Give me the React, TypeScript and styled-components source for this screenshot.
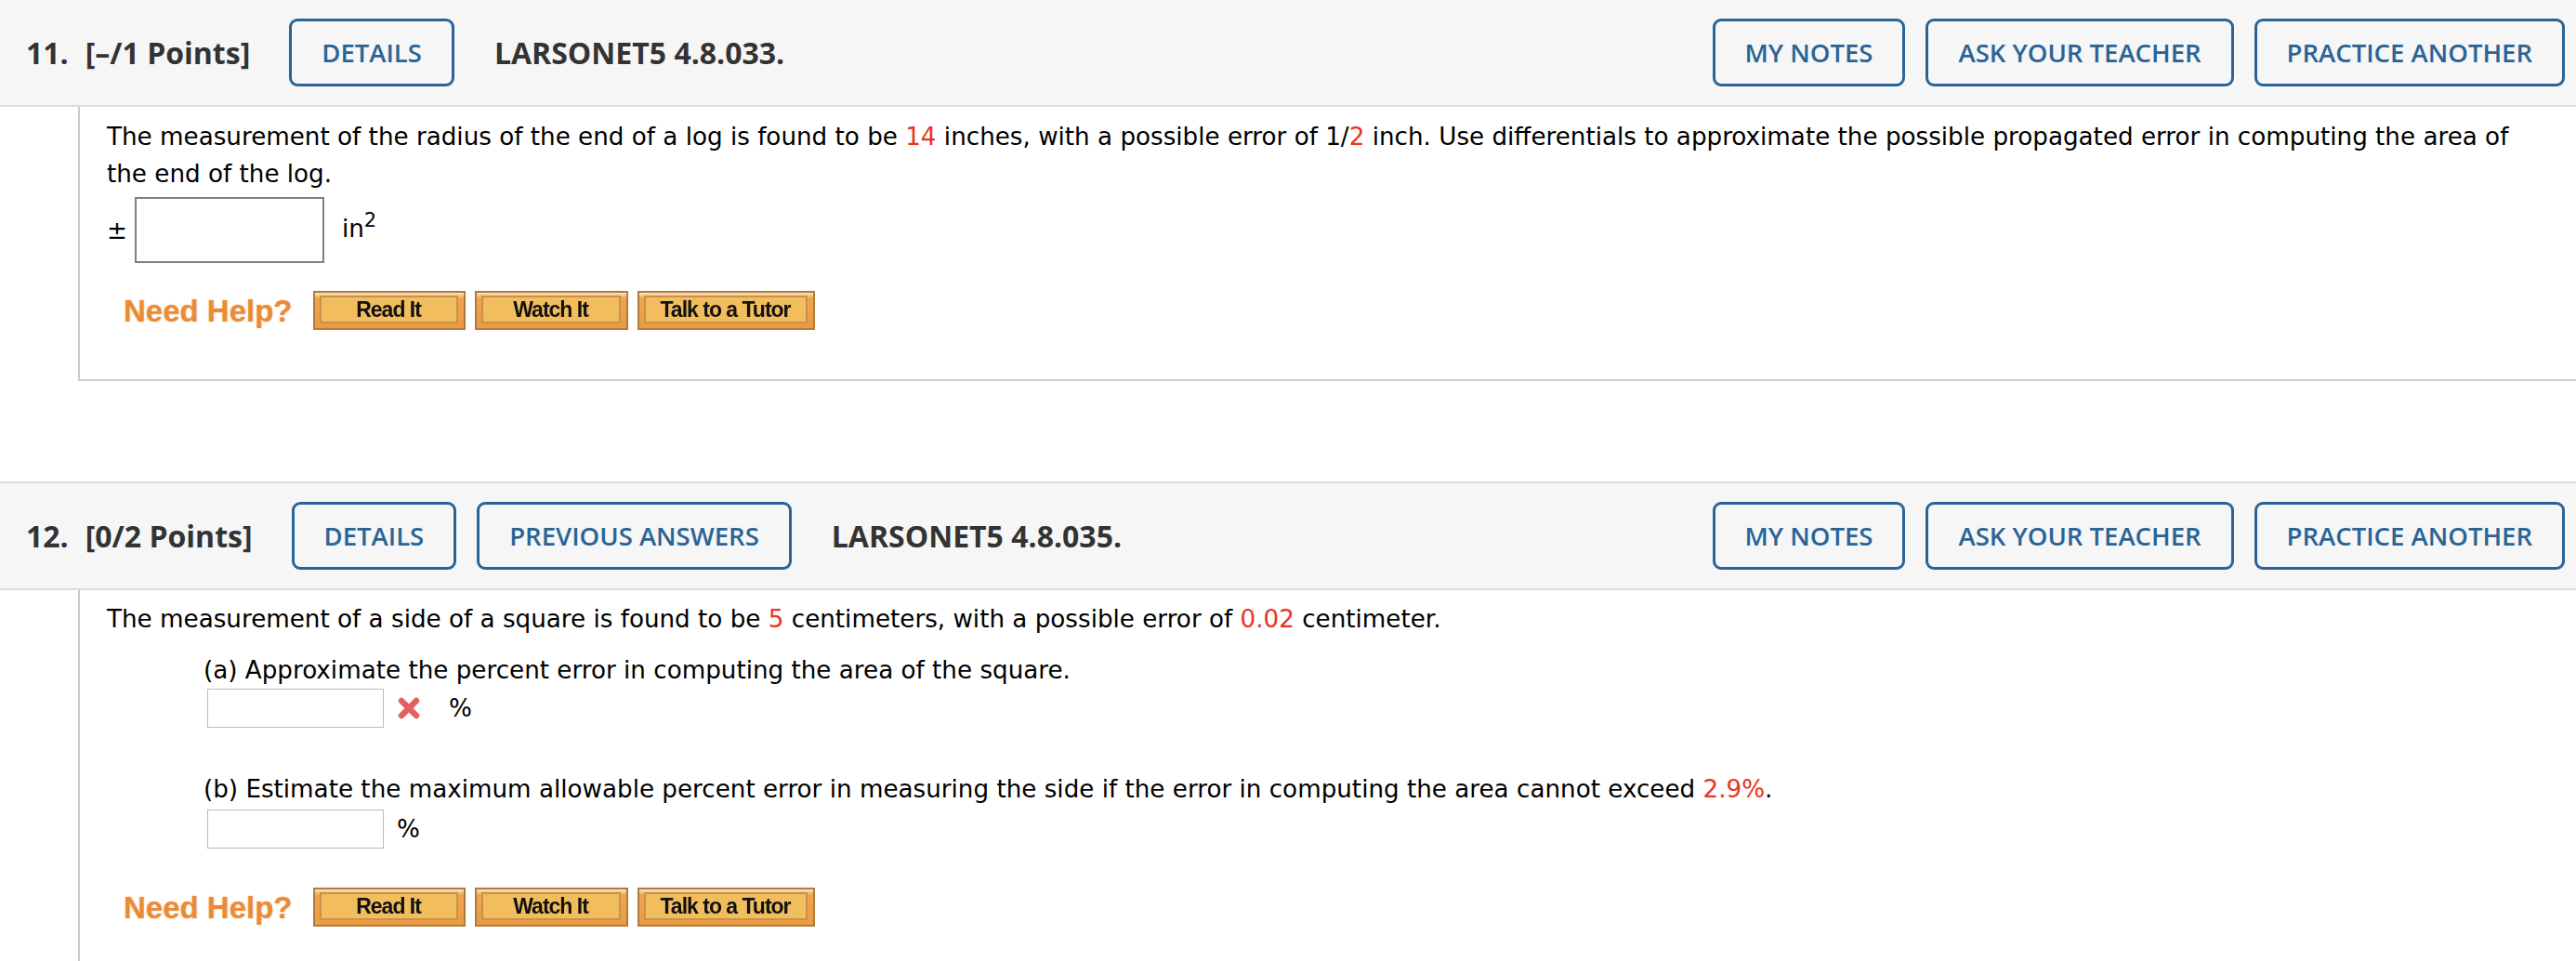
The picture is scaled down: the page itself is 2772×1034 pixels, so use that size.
import React from 'react';
import styled, { createGlobalStyle } from 'styled-components';

const GlobalStyle = createGlobalStyle`
  html, body {
    margin: 0;
    padding: 0;
    background: #fff;
  }
  body {
    font-family: "DejaVu Sans", Verdana, sans-serif;
    color: #000;
  }
`;

const Page = styled.div`
  width: 2772px;
`;

const Question = styled.section<{ $spaced?: boolean }>`
  margin-top: ${p => (p.$spaced ? '108px' : '0')};
`;

const Header = styled.div<{ $topBorder?: boolean }>`
  display: flex;
  align-items: center;
  box-sizing: border-box;
  height: ${p => (p.$topBorder ? 117 : 115)}px;
  padding: 0 12px 0 28px;
  background: #f6f6f6;
  border-top: ${p => (p.$topBorder ? '2px solid #ddd' : 'none')};
  border-bottom: 2px solid #ddd;
  font-family: "Open Sans", "Liberation Sans", sans-serif;
`;

const Title = styled.div`
  display: flex;
  align-items: center;
  font-size: 32px;
  font-weight: 700;
  color: #333;
  margin-right: 42px;
`;

const Num = styled.span`
  margin-right: 18px;
`;

const ButtonGroup = styled.div<{ $right?: boolean }>`
  display: flex;
  gap: 22px;
  margin-left: ${p => (p.$right ? 'auto' : '0')};
`;

const OutlineButton = styled.button`
  box-sizing: border-box;
  height: 73px;
  padding: 0 32px;
  border: 3px solid #2a6496;
  border-radius: 9px;
  background: transparent;
  color: #2a6496;
  font-family: "Open Sans", "Liberation Sans", sans-serif;
  font-size: 27.5px;
  font-weight: 600;
  cursor: pointer;
`;

const Code = styled.span`
  margin-left: 43px;
  font-size: 32px;
  font-weight: 700;
  color: #333;
`;

const Body = styled.div<{ $pt: number; $pb: number }>`
  margin-left: 84px;
  padding: ${p => p.$pt}px 42px ${p => p.$pb}px 29px;
  border-left: 2px solid #ccc;
  border-bottom: 2px solid #ccc;
  font-size: 26.2px;
  line-height: 40px;
`;

const Prompt = styled.div``;

const Red = styled.span`
  color: #ea3323;
`;

const AnswerRow = styled.div`
  display: flex;
  align-items: center;
  margin-top: 5px;
`;

const BigInput = styled.div`
  box-sizing: border-box;
  width: 204px;
  height: 71px;
  margin: 0 19px 0 8px;
  border: 2px solid #808080;
  background: #fff;
`;

const Unit = styled.span`
  position: relative;
  top: -2px;
`;

const Sup = styled.sup`
  font-size: 21px;
  line-height: 0;
  vertical-align: 11px;
`;

const Part = styled.div<{ $mt: number }>`
  margin: ${p => p.$mt}px 0 0 104px;
`;

const PartRow = styled.div<{ $mt: number }>`
  display: flex;
  align-items: center;
  margin: ${p => p.$mt}px 0 0 4px;
  height: 42px;
`;

const SmallInput = styled.div`
  box-sizing: border-box;
  width: 190px;
  height: 42px;
  border: 1px solid #bbb;
  background: #fff;
`;

const WrongMark = styled.svg`
  margin-left: 14px;
  filter: blur(0.6px);
`;

const Percent = styled.span<{ $ml: number }>`
  margin-left: ${p => p.$ml}px;
`;

const HelpRow = styled.div<{ $mt: number }>`
  display: flex;
  align-items: center;
  gap: 10px;
  margin: ${p => p.$mt}px 0 0 18px;
`;

const NeedHelp = styled.span`
  margin-right: 12px;
  font-family: "Liberation Sans", Arial, sans-serif;
  font-size: 33px;
  font-weight: 700;
  line-height: 41px;
  color: #e98b37;
  text-shadow: 0 0 2px rgba(233, 139, 55, 0.55);
`;

const HelpButton = styled.span<{ $w: number }>`
  display: flex;
  box-sizing: border-box;
  width: ${p => p.$w}px;
  height: 42px;
  padding: 3px 6px 5px 5px;
  border: 2px solid #b07c3e;
  background: linear-gradient(#fbe6c4 0, #f0a54d 6px, #eb9b42 100%);
`;

const HelpFace = styled.span`
  flex: 1;
  display: flex;
  align-items: center;
  justify-content: center;
  border: 2px solid #c8924e;
  background: #f2bd5c;
  font-family: "Liberation Sans", Arial, sans-serif;
  font-size: 23px;
  font-weight: 700;
  letter-spacing: -1px;
  color: #111;
  filter: blur(0.5px);
`;

const HelpButtons = () => (
  <>
    <NeedHelp>Need Help?</NeedHelp>
    <HelpButton $w={164}>
      <HelpFace>Read It</HelpFace>
    </HelpButton>
    <HelpButton $w={165}>
      <HelpFace>Watch It</HelpFace>
    </HelpButton>
    <HelpButton $w={191}>
      <HelpFace>Talk to a Tutor</HelpFace>
    </HelpButton>
  </>
);

const RightButtons = () => (
  <ButtonGroup $right>
    <OutlineButton>MY NOTES</OutlineButton>
    <OutlineButton>ASK YOUR TEACHER</OutlineButton>
    <OutlineButton>PRACTICE ANOTHER</OutlineButton>
  </ButtonGroup>
);

const App = () => {
  return (
    <Page>
      <GlobalStyle />

      <Question>
        <Header>
          <Title>
            <Num>11.</Num>
            <span>[–/1 Points]</span>
          </Title>
          <ButtonGroup>
            <OutlineButton>DETAILS</OutlineButton>
          </ButtonGroup>
          <Code>LARSONET5 4.8.033.</Code>
          <RightButtons />
        </Header>
        <Body $pt={12} $pb={53}>
          <Prompt>
            The measurement of the radius of the end of a log is found to be <Red>14</Red> inches,
            with a possible error of 1/<Red>2</Red> inch. Use differentials to approximate the
            possible propagated error in computing the area of the end of the log.
          </Prompt>
          <AnswerRow>
            <span>±</span>
            <BigInput />
            <Unit>
              in<Sup>2</Sup>
            </Unit>
          </AnswerRow>
          <HelpRow $mt={30}>
            <HelpButtons />
          </HelpRow>
        </Body>
      </Question>

      <Question $spaced>
        <Header $topBorder>
          <Title>
            <Num>12.</Num>
            <span>[0/2 Points]</span>
          </Title>
          <ButtonGroup>
            <OutlineButton>DETAILS</OutlineButton>
            <OutlineButton>PREVIOUS ANSWERS</OutlineButton>
          </ButtonGroup>
          <Code>LARSONET5 4.8.035.</Code>
          <RightButtons />
        </Header>
        <Body $pt={11} $pb={60}>
          <Prompt>
            The measurement of a side of a square is found to be <Red>5</Red> centimeters, with a
            possible error of <Red>0.02</Red> centimeter.
          </Prompt>
          <Part $mt={15}>
            (a) Approximate the percent error in computing the area of the square.
            <PartRow $mt={0}>
              <SmallInput />
              <WrongMark width="26" height="26" viewBox="0 0 26 26">
                <path
                  d="M5 5 L21 21 M21 5 L5 21"
                  stroke="#e45f5f"
                  strokeWidth="6.5"
                  strokeLinecap="round"
                  fill="none"
                />
              </WrongMark>
              <Percent $ml={30}>%</Percent>
            </PartRow>
          </Part>
          <Part $mt={46}>
            (b) Estimate the maximum allowable percent error in measuring the side if the error in
            computing the area cannot exceed <Red>2.9%</Red>.
            <PartRow $mt={2}>
              <SmallInput />
              <Percent $ml={14}>%</Percent>
            </PartRow>
          </Part>
          <HelpRow $mt={42}>
            <HelpButtons />
          </HelpRow>
        </Body>
      </Question>
    </Page>
  );
};

export default App;
